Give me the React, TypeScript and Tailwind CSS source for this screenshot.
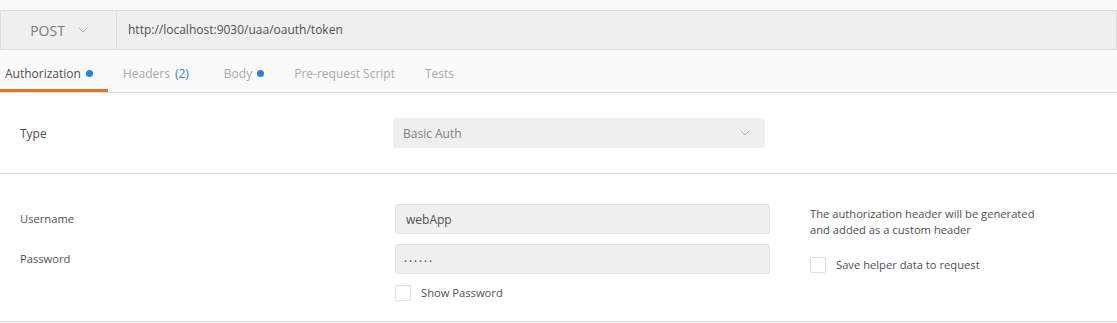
import { ChevronDown } from "lucide-react";

const TABS = [
  { label: "Authorization", active: true, dot: true },
  { label: "Headers", count: 2 },
  { label: "Body", dot: true, extra: true },
  { label: "Pre-request Script" },
  { label: "Tests" },
];

function Checkbox() {
  return <span className="h-[16px] w-[16px] shrink-0 rounded-[2px] border border-[#e0e0e0] bg-white" />;
}

export default function App() {
  return (
    <div className="h-[323px] w-[1117px] overflow-hidden bg-white text-[12px] text-[#505050] [font-family:'Open_Sans',sans-serif]">
      <div className="h-[10px] bg-[#fafafa]" />

      {/* Request bar */}
      <div className="flex h-[40px] w-[1117px] border border-[#dcdcdc] bg-[#efefef]">
        <div className="flex w-[116px] shrink-0 items-center justify-center gap-[10px] border-r border-[#dcdcdc] pl-[4px]">
          <span className="text-[14px] text-[#7a7a7a]">POST</span>
          <ChevronDown className="h-[16px] w-[16px] text-[#b0b0b0]" strokeWidth={1.5} />
        </div>
        <div className="flex items-center pl-[11px] text-[12px] text-[#505050]">
          http://localhost:9030/uaa/oauth/token
        </div>
      </div>

      {/* Tabs */}
      <div className="flex h-[43px] border-b border-[#dcdcdc] bg-[#fafafa]">
        {TABS.map((t, i) => (
          <div
            key={t.label}
            className={`relative flex items-center gap-[5px] pt-[5px] ${i === 0 ? "pl-[5px] pr-[15px]" : "px-[15px]"} ${t.extra ? "ml-[5px]" : ""} ${t.active ? "text-[#505050]" : "text-[#a8a8a8]"}`}
          >
            <span>{t.label}</span>
            {t.count !== undefined && <span className="text-[#2f7de1]">({t.count})</span>}
            {t.dot && <span className="h-[7px] w-[7px] rounded-full bg-[#2f7de1]" />}
            {t.active && <span className="absolute bottom-0 left-0 right-0 h-[3px] bg-[#e8731f]" />}
          </div>
        ))}
      </div>

      {/* Type */}
      <div className="flex items-center border-b border-[#dcdcdc] py-[25px] pl-[20px]">
        <span className="w-[373px] shrink-0 pt-[1px]">Type</span>
        <div className="flex h-[30px] w-[372px] items-center justify-between rounded-[3px] bg-[#efefef] pl-[10px] pr-[12px] text-[#808080]">
          <span className="pt-[1px]">Basic Auth</span>
          <ChevronDown className="h-[16px] w-[16px] text-[#b0b0b0]" strokeWidth={1.5} />
        </div>
      </div>

      {/* Credentials */}
      <div className="flex border-b border-[#dcdcdc] pb-[19px] pl-[20px] pt-[30px] text-[11.2px]">
        <div className="flex flex-col">
          <div className="flex items-center">
            <span className="w-[375px] shrink-0 pt-[1px]">Username</span>
            <div className="flex h-[30px] w-[375px] items-center rounded-[3px] border border-[#e2e2e2] bg-[#efefef] pl-[10px] pt-[1px] text-[12px]">
              webApp
            </div>
          </div>
          <div className="mt-[10px] flex items-center">
            <span className="w-[375px] shrink-0 pt-[1px]">Password</span>
            <div className="flex h-[30px] w-[375px] items-center rounded-[3px] border border-[#e2e2e2] bg-[#efefef] pl-[8px] pt-[3px] text-[8px] tracking-[2px] text-[#606060]">
              ••••••
            </div>
          </div>
          <div className="mt-[10px] flex items-center pl-[375px]">
            <Checkbox />
            <span className="ml-[10px] pt-[1px]">Show Password</span>
          </div>
        </div>
        <div className="ml-[40px] flex flex-col pt-[2px]">
          <p className="leading-[16px]">
            The authorization header will be generated
            <br />
            and added as a custom header
          </p>
          <div className="mt-[18px] flex items-center">
            <Checkbox />
            <span className="ml-[10px] pt-[1px]">Save helper data to request</span>
          </div>
        </div>
      </div>
      <div className="h-[3px] bg-[#fafafa]" />
    </div>
  );
}
